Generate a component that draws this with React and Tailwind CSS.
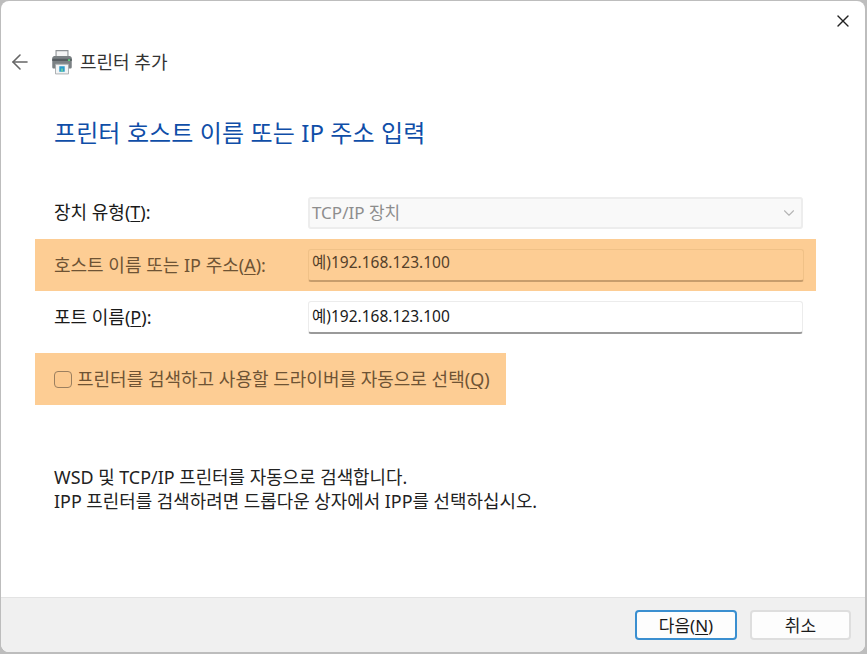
import { ArrowLeft, ChevronDown, X } from 'lucide-react';

const font = { fontFamily: '"Noto Sans", "Noto Sans CJK KR", sans-serif' };

function Mnemonic({ children }) {
  return <>(<span className="underline underline-offset-2">{children}</span>)</>;
}

function PrinterIcon() {
  return (
    <svg width="26" height="26" viewBox="0 0 24 24">
      <path d="M6.5 1.5h11v8h-11z" fill="#f4f4f4" stroke="#8f9396" />
      <path d="M3 8.5c0-1 1-2 2-2h14c1 0 2 1 2 2v8c0 1-.6 1.5-1.5 1.5h-15C3.600 18 3 17.500 3 16.500z" fill="#7b8184" />
      <path d="M3 9h18v2H3z" fill="#565c60" />
      <path d="M6 14h12v9H6z" fill="#f2f4f5" stroke="#a2a6a8" strokeWidth="0.8" />
      <path d="M9.500 16h5v5h-5z" fill="#2b9bc9" />
      <path d="M11 18h2v3h-2z" fill="#67c8a6" />
      <path d="M17.500 9.500h2v1.500h-2z" fill="#5fd07a" />
    </svg>
  );
}

export default function App() {
  return (
    <div className="h-[654px] w-[867px] overflow-hidden bg-[#bdbdbd] pl-px pt-px pr-[2px] pb-[2px] text-[18px] text-[#1a1a1a]" style={font}>
      <div className="flex h-full flex-col overflow-hidden rounded-lg bg-white">
        <div className="flex h-[596px] flex-col">
          <div className="flex justify-end pr-[12px] pt-[10px]">
            <X className="h-[20px] w-[20px] text-[#222]" strokeWidth={1.6} />
          </div>

          <div className="mt-[11px] flex h-[40px] items-center pl-[7px]">
            <ArrowLeft className="h-[24px] w-[24px] text-[#666]" strokeWidth={1.6} />
            <div className="ml-[17px]">
              <PrinterIcon />
            </div>
            <span className="ml-[5px] text-[18px] text-[#333]">프린터 추가</span>
          </div>

          <h1 className="mt-[35px] pl-[53px] text-[24px] leading-[32px] tracking-[0.1px] text-[#0f4ea8]">
            프린터 호스트 이름 또는 IP 주소 입력
          </h1>

          <div className="mt-[47px] flex h-[33px] items-center pl-[53px] pr-[62px]">
            <span className="w-[254px]">장치 유형<Mnemonic>T</Mnemonic>:</span>
            <div className="flex h-[32px] flex-1 items-center justify-between rounded-[3px] border-2 border-[#ededed] bg-[#f9f9f9] px-[2px] text-[17px] text-[#8d8d8d]">
              <span>TCP/IP 장치</span>
              <ChevronDown className="mr-[1px] h-[18px] w-[18px] text-[#b5b5b5]" strokeWidth={1.5} />
            </div>
          </div>

          <div className="ml-[34px] mt-[10px] flex h-[52px] w-[781px] items-center bg-[#fdcd94] pl-[19px] pr-[12px] text-[#6e5334]">
            <span className="w-[254px]">호스트 이름 또는 IP 주소<Mnemonic>A</Mnemonic>:</span>
            <div className="flex h-[33px] flex-1 items-center rounded-[3px] border border-[#f0c187] border-b-2 border-b-[#c79d6c] px-[3px] pb-[3px] text-[15.500px] text-[#54402a]">
              예)192.168.123.100
            </div>
          </div>

          <div className="mt-[10px] flex h-[33px] items-center pl-[53px] pr-[62px]">
            <span className="w-[254px]">포트 이름<Mnemonic>P</Mnemonic>:</span>
            <div className="flex h-[33px] flex-1 items-center rounded-[3px] border border-[#ececec] border-b-2 border-b-[#9a9a9a] bg-white px-[3px] pb-[1px] text-[15.500px]">
              예)192.168.123.100
            </div>
          </div>

          <div className="ml-[34px] mt-[19px] flex h-[52px] w-[471px] items-center bg-[#fdcd94] pl-[19px] text-[#6e5334]">
            <span className="h-[17px] w-[18px] shrink-0 rounded-[4px] border border-[#9b7f5f] bg-[#fbc98f]" />
            <span className="ml-[5px] whitespace-nowrap">프린터를 검색하고 사용할 드라이버를 자동으로 선택<Mnemonic>Q</Mnemonic></span>
          </div>

          <div className="mt-[60px] pl-[53px] text-[17.900px] leading-[24px] text-[#222]">
            <p>WSD 및 TCP/IP 프린터를 자동으로 검색합니다.</p>
            <p>IPP 프린터를 검색하려면 드롭다운 상자에서 IPP를 선택하십시오.</p>
          </div>
        </div>

        <div className="flex flex-1 items-start justify-end gap-[13px] border-t border-[#e3e3e3] bg-[#f0f0f0] pr-[14px] pt-[12px]">
          <button className="h-[30px] w-[102px] rounded-[4px] border-2 border-[#3a8fd0] bg-[#fdfdfd] text-[17px] leading-none">
            다음<Mnemonic>N</Mnemonic>
          </button>
          <button className="h-[30px] w-[101px] rounded-[4px] border-2 border-[#dedede] bg-[#fdfdfd] text-[17px] leading-none">
            취소
          </button>
        </div>
      </div>
    </div>
  );
}
